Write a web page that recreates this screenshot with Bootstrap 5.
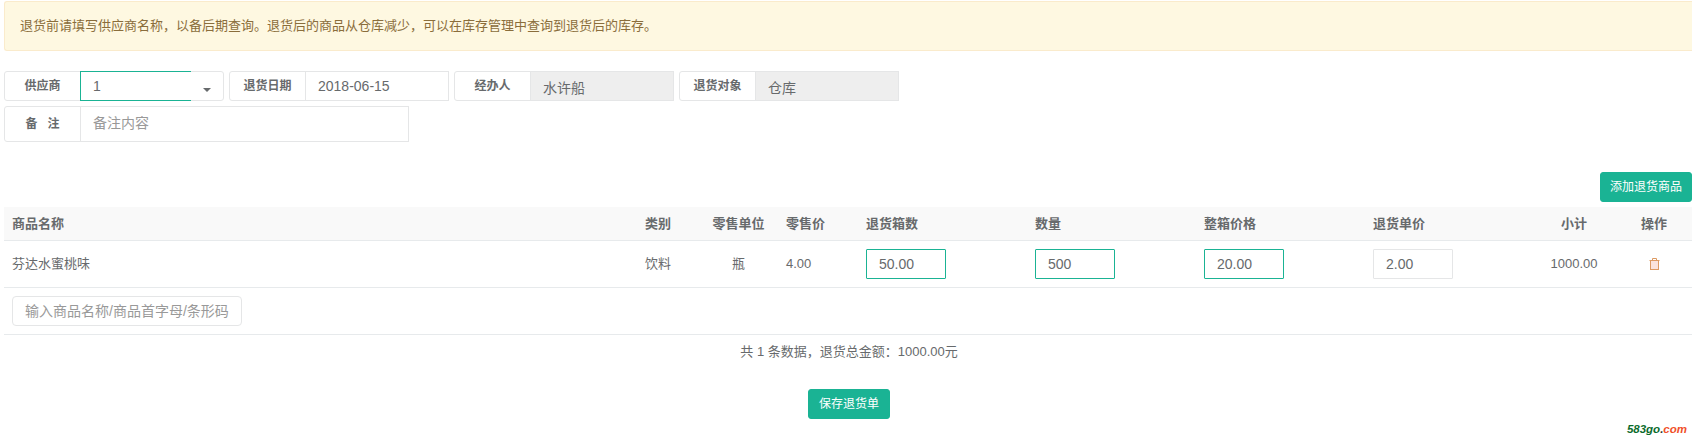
<!DOCTYPE html>
<html lang="zh-CN">
<head>
  <meta charset="UTF-8">
  <meta name="viewport" content="width=device-width, initial-scale=1">
  <title>退货单</title>
  <link href="https://cdn.jsdelivr.net/npm/bootstrap@5.3.3/dist/css/bootstrap.min.css" rel="stylesheet">
  <style>
    html, body {
      height: 100%;
      overflow: hidden;
    }
    body {
      position: relative;
      padding: 1px 0 0 4px;
      color: #676a6c;
      font-family: "Liberation Sans", "Noto Sans CJK SC", sans-serif;
      font-size: 13px;
    }
    .return-alert {
      background: #fef8e1;
      border: 1px solid #faebcc;
      border-right: 0;
      border-radius: 3px 0 0 3px;
      color: #8a6d3b;
      font-size: 13px;
      line-height: 18px;
      padding: 15px;
      margin-bottom: 20px;
    }
    .form-rows {
      width: 900px;
      gap: 5px;
    }
    .field-group {
      width: 220px;
      height: 30px;
    }
    .field-group.field-wide {
      width: 405px;
      height: 36px;
    }
    .field-group .input-group-text {
      width: 77px;
      justify-content: center;
      background: #fff;
      border-color: #e5e6e7;
      border-radius: 3px 0 0 3px;
      color: #676a6c;
      font-size: 12px;
      font-weight: 700;
      padding: 0;
    }
    .field-group .form-control {
      border-color: #e5e6e7;
      border-radius: 0;
      color: #676a6c;
      font-size: 14px;
      padding: 0 12px;
      height: 100%;
      box-shadow: none;
    }
    .field-group.field-wide .form-control {
      padding-bottom: 2px;
    }
    .field-group .form-control::placeholder,
    .search-input::placeholder {
      color: #999;
    }
    .field-group .form-control:disabled {
      background: #eee;
      padding-top: 1px;
    }
    .field-group .supplier-input {
      border-color: #1ab394;
      border-right: 0;
    }
    .caret-btn {
      width: 34px;
      border: 1px solid #e5e6e7;
      border-radius: 0 3px 3px 0;
      background: #fff;
      padding: 3px 0 0;
    }
    .caret-shape {
      display: inline-block;
      border-top: 4px solid #676a6c;
      border-left: 4px solid transparent;
      border-right: 4px solid transparent;
    }
    .btn-teal {
      background: #1ab394;
      border: 1px solid #1ab394;
      border-radius: 3px;
      color: #fff;
      font-size: 12px;
      line-height: 18px;
      padding: 5px 9px;
    }
    .btn-teal:hover {
      background: #18a689;
      color: #fff;
    }
    .btn-teal.btn-save {
      padding: 5px 10px;
    }
    .add-row {
      margin-top: 30px;
      margin-bottom: 5px;
      height: 30px;
    }
    .goods-table {
      table-layout: fixed;
      width: 1690px;
      margin: 0;
      font-size: 13px;
      --bs-table-color: #676a6c;
      --bs-table-border-color: #e7eaec;
    }
    .goods-table th {
      background: #f9f9f9;
      color: #676a6c;
      height: 33px;
      padding: 0 8px;
      vertical-align: middle;
      border-bottom: 1px solid #e7eaec;
    }
    .goods-table td {
      height: 47px;
      padding: 0 8px;
      vertical-align: middle;
    }
    .qty-input {
      display: block;
      width: 80px;
      height: 30px;
      padding: 0 12px;
      border: 1px solid #e5e6e7;
      border-radius: 1px;
      color: #676a6c;
      font-size: 14px;
      outline: 0;
    }
    .qty-input.qty-active {
      border-color: #1ab394;
    }
    .search-input {
      display: block;
      width: 230px;
      height: 30px;
      padding: 0 12px;
      border: 1px solid #e5e6e7;
      border-radius: 4px;
      font-size: 14px;
      color: #676a6c;
      outline: 0;
    }
    .summary-area {
      padding-left: 2px;
    }
    .total-line {
      line-height: 18px;
      margin-top: 8px;
      margin-bottom: 28px;
    }
    .trash-icon {
      display: block;
      margin: 0 auto;
    }
    .site-mark {
      position: absolute;
      right: 5px;
      bottom: 8px;
      font-size: 11.5px;
      line-height: 16px;
      font-weight: 700;
      font-style: italic;
      color: #333;
    }
    .site-mark .mark-green {
      color: #0b6b2b;
    }
    .site-mark .mark-red {
      color: #f0502a;
    }
  </style>
</head>
<body>

  <div class="alert return-alert" role="alert">退货前请填写供应商名称，以备后期查询。退货后的商品从仓库减少，可以在库存管理中查询到退货后的库存。</div>

  <div class="d-flex flex-wrap form-rows">
    <div class="input-group flex-nowrap field-group">
      <span class="input-group-text">供应商</span>
      <input type="text" class="form-control supplier-input" value="1">
      <button type="button" class="caret-btn"><span class="caret-shape"></span></button>
    </div>
    <div class="input-group flex-nowrap field-group">
      <span class="input-group-text">退货日期</span>
      <input type="text" class="form-control" value="2018-06-15">
    </div>
    <div class="input-group flex-nowrap field-group">
      <span class="input-group-text">经办人</span>
      <input type="text" class="form-control" value="水许船" disabled>
    </div>
    <div class="input-group flex-nowrap field-group">
      <span class="input-group-text">退货对象</span>
      <input type="text" class="form-control" value="仓库" disabled>
    </div>
    <div class="input-group flex-nowrap field-group field-wide">
      <span class="input-group-text">备&nbsp;&nbsp;&nbsp;注</span>
      <input type="text" class="form-control" placeholder="备注内容">
    </div>
  </div>

  <div class="d-flex justify-content-end add-row">
    <button type="button" class="btn btn-teal">添加退货商品</button>
  </div>

  <table class="table goods-table">
    <colgroup>
      <col style="width:633px">
      <col style="width:62px">
      <col style="width:79px">
      <col style="width:80px">
      <col style="width:169px">
      <col style="width:169px">
      <col style="width:169px">
      <col style="width:169px">
      <col style="width:80px">
      <col style="width:80px">
    </colgroup>
    <thead>
      <tr>
        <th>商品名称</th>
        <th>类别</th>
        <th class="text-center">零售单位</th>
        <th>零售价</th>
        <th>退货箱数</th>
        <th>数量</th>
        <th>整箱价格</th>
        <th>退货单价</th>
        <th class="text-center">小计</th>
        <th class="text-center">操作</th>
      </tr>
    </thead>
    <tbody>
      <tr>
        <td>芬达水蜜桃味</td>
        <td>饮料</td>
        <td class="text-center">瓶</td>
        <td>4.00</td>
        <td><input type="text" class="qty-input qty-active" value="50.00"></td>
        <td><input type="text" class="qty-input qty-active" value="500"></td>
        <td><input type="text" class="qty-input qty-active" value="20.00"></td>
        <td><input type="text" class="qty-input" value="2.00"></td>
        <td class="text-center">1000.00</td>
        <td>
          <svg class="trash-icon" width="11" height="12" viewBox="0 0 11 12" fill="none" stroke="#dd9a62" stroke-width="1">
            <path d="M0.5 2.5h10M3.5 2.5V0.5h4v2"/>
            <rect x="1.5" y="2.5" width="8" height="9" fill="#fbe3dc"/>
          </svg>
        </td>
      </tr>
      <tr>
        <td colspan="10"><input type="text" class="search-input" placeholder="输入商品名称/商品首字母/条形码"></td>
      </tr>
    </tbody>
  </table>

  <div class="summary-area">
    <div class="text-center total-line">共 1 条数据，退货总金额：1000.00元</div>
    <div class="text-center">
      <button type="button" class="btn btn-teal btn-save">保存退货单</button>
    </div>
  </div>

  <div class="site-mark"><span class="mark-green">583go</span>.<span class="mark-red">com</span></div>

  <script src="https://cdn.jsdelivr.net/npm/bootstrap@5.3.3/dist/js/bootstrap.bundle.min.js"></script>
</body>
</html>
